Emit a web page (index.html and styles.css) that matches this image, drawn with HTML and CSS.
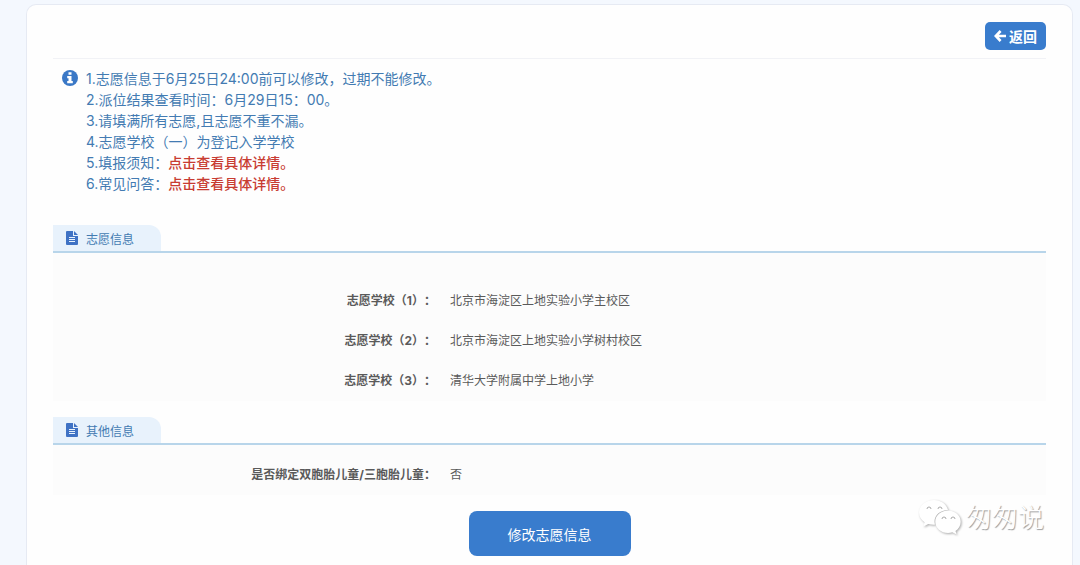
FILE: index.html
```html
<!DOCTYPE html>
<html lang="zh-CN">
<head>
    <meta charset="UTF-8">
    <meta name="viewport" content="width=device-width, initial-scale=1.0">
    <title>志愿信息</title>
    <link rel="stylesheet" href="styles.css">
</head>
<body>
    <main class="card">
        <!-- 顶部工具栏 -->
        <div class="toolbar">
            <button type="button" class="back-btn">
                <svg width="12" height="12" viewBox="0 0 12 12" fill="none" stroke="currentColor" stroke-width="2.6">
                    <path d="M6.600 1 1.800 6l4.800 5M2.200 6H12"/>
                </svg>
                返回
            </button>
        </div>

        <!-- 填报提示 -->
        <div class="notice">
            <svg class="notice-icon" width="16" height="16" viewBox="0 0 16 16">
                <circle cx="8" cy="8" r="8" fill="#3a78c6"/>
                <path fill="#fff" d="M6.500 2.200h3v2.600h-3zM5.200 6h4.300v5.100h1.300v2.200H5.200v-2.200h1.300V8.200H5.200z"/>
            </svg>
            <div class="notice-text">
                <p>1.志愿信息于6月25日24:00前可以修改，过期不能修改。</p>
                <p>2.派位结果查看时间：6月29日15：00。</p>
                <p>3.请填满所有志愿,且志愿不重不漏。</p>
                <p>4.志愿学校（一）为登记入学学校</p>
                <p>5.填报须知：<a href="#">点击查看具体详情。</a></p>
                <p>6.常见问答：<a href="#">点击查看具体详情。</a></p>
            </div>
        </div>

        <!-- 志愿信息 -->
        <section class="section">
            <div class="section-head">
                <h2 class="tab">
                    <svg width="12" height="14" viewBox="0 0 12 14">
                        <path fill="#3f72c4" d="M1 0h6v5h5v8a1 1 0 0 1-1 1H1a1 1 0 0 1-1-1V1a1 1 0 0 1 1-1zM8 0l4 4H8z"/>
                        <path stroke="#e8f2fc" d="M3 6.500h6M3 8.500h6M3 10.500h6"/>
                    </svg>
                    志愿信息
                </h2>
            </div>
            <dl class="panel panel-schools">
                <div class="row"><dt>志愿学校（1）：</dt><dd>北京市海淀区上地实验小学主校区</dd></div>
                <div class="row"><dt>志愿学校（2）：</dt><dd>北京市海淀区上地实验小学树村校区</dd></div>
                <div class="row"><dt>志愿学校（3）：</dt><dd>清华大学附属中学上地小学</dd></div>
            </dl>
        </section>

        <!-- 其他信息 -->
        <section class="section">
            <div class="section-head">
                <h2 class="tab">
                    <svg width="12" height="14" viewBox="0 0 12 14">
                        <path fill="#3f72c4" d="M1 0h6v5h5v8a1 1 0 0 1-1 1H1a1 1 0 0 1-1-1V1a1 1 0 0 1 1-1zM8 0l4 4H8z"/>
                        <path stroke="#e8f2fc" d="M3 6.500h6M3 8.500h6M3 10.500h6"/>
                    </svg>
                    其他信息
                </h2>
            </div>
            <dl class="panel">
                <div class="row"><dt>是否绑定双胞胎儿童/三胞胎儿童：</dt><dd>否</dd></div>
            </dl>
        </section>

        <div class="actions">
            <button type="button" class="submit-btn">修改志愿信息</button>
        </div>
    </main>

    <!-- 公众号水印 -->
    <div class="watermark">
        <svg width="42" height="36" viewBox="0 0 42 36" fill="#fff">
            <path d="M15 0C6.700 0 0 5.600 0 12.500c0 4 2.200 7.400 5.600 9.700L4.300 26.500l5-2.600c1.800.5 3.700.8 5.700.8l1-.1c-.3-1-.5-2-.5-3.100 0-6.400 6-11.500 13.500-11.500C27.600 4.300 21.900 0 15 0z"/>
            <path d="M29 10.500c-7 0-12.700 5-12.700 11.200S22 33 29 33c1.500 0 3-.2 4.300-.7l4.300 2.300-1.100-3.700c3.200-2 5.200-5.400 5.200-9.200 0-6.200-5.700-11.200-12.700-11.200z"/>
            <path class="eyes" fill="none" d="M8 9a2 2 0 0 1 4 0M19 9a2 2 0 0 1 4 0M23 19a2 2 0 0 1 4 0M32 19a2 2 0 0 1 4 0"/>
        </svg>
        <span>匆匆说</span>
    </div>
</body>
</html>
```
FILE: styles.css
```css
* {
    box-sizing: border-box;
}

body {
    margin: 0;
    padding: 4px 7px 0 26px;
    min-height: 100vh;
    display: flex;
    background-color: #f4f8fe;
    color: #5a5a5a;
    font-family: Inter, "Noto Sans CJK SC", sans-serif;
    font-size: 12px;
    text-spacing-trim: space-all;
}

h2, p, dl, dd {
    margin: 0;
}

button {
    border: none;
    background-color: #397ccd;
    color: #fff;
    font-family: inherit;
    font-size: 14px;
    cursor: pointer;
}

.card {
    flex: 1;
    padding: 17px 26px 8px;
    background-color: #fefefe;
    border: 1px solid #e6eaf3;
    border-bottom: none;
    border-radius: 10px 10px 0 0;
}

.toolbar {
    display: flex;
    justify-content: flex-end;
    padding-bottom: 8px;
    border-bottom: 1px solid #f1f2f6;
}

.back-btn {
    display: flex;
    align-items: center;
    gap: 3px;
    height: 28px;
    padding: 0 9px;
    border-radius: 5px;
    font-weight: bold;
}

.notice {
    display: flex;
    gap: 8px;
    padding: 9px 9px 31px;
    color: #437bb2;
    font-size: 14px;
    line-height: 21px;
}

.notice-icon {
    margin-top: 2px;
}

.notice a {
    color: #c83c32;
    font-weight: 500;
    text-decoration: none;
}

.section {
    margin-bottom: 16px;
}

.section-head {
    display: flex;
    border-bottom: 2px solid #b8d5ea;
}

.tab {
    display: flex;
    align-items: center;
    gap: 8px;
    width: 108px;
    height: 26px;
    padding-left: 13px;
    background-color: #e8f2fc;
    border-radius: 0 12px 0 0;
    color: #437bb2;
    font-size: 12px;
    font-weight: normal;
}

.panel {
    padding: 10px 0 0;
    background-color: #fcfcfc;
}

.panel-schools {
    padding: 28px 0 0;
}

.row {
    display: flex;
    gap: 14px;
    height: 40px;
    line-height: 40px;
}

.row dt {
    width: 383px;
    text-align: right;
    font-weight: bold;
}

.actions {
    display: flex;
    justify-content: center;
}

.submit-btn {
    width: 162px;
    height: 45px;
    border-radius: 8px;
}

.watermark {
    position: absolute;
    right: 36px;
    bottom: 29px;
    display: flex;
    align-items: center;
    gap: 5px;
    color: #fff;
    font-size: 26px;
    font-weight: 300;
    line-height: 36px;
    text-shadow: 1px 1px 1px #999;
}

.watermark svg {
    overflow: visible;
    filter: drop-shadow(1px 1px 1px #aaa);
}

.eyes {
    stroke: #aaa;
}
```
